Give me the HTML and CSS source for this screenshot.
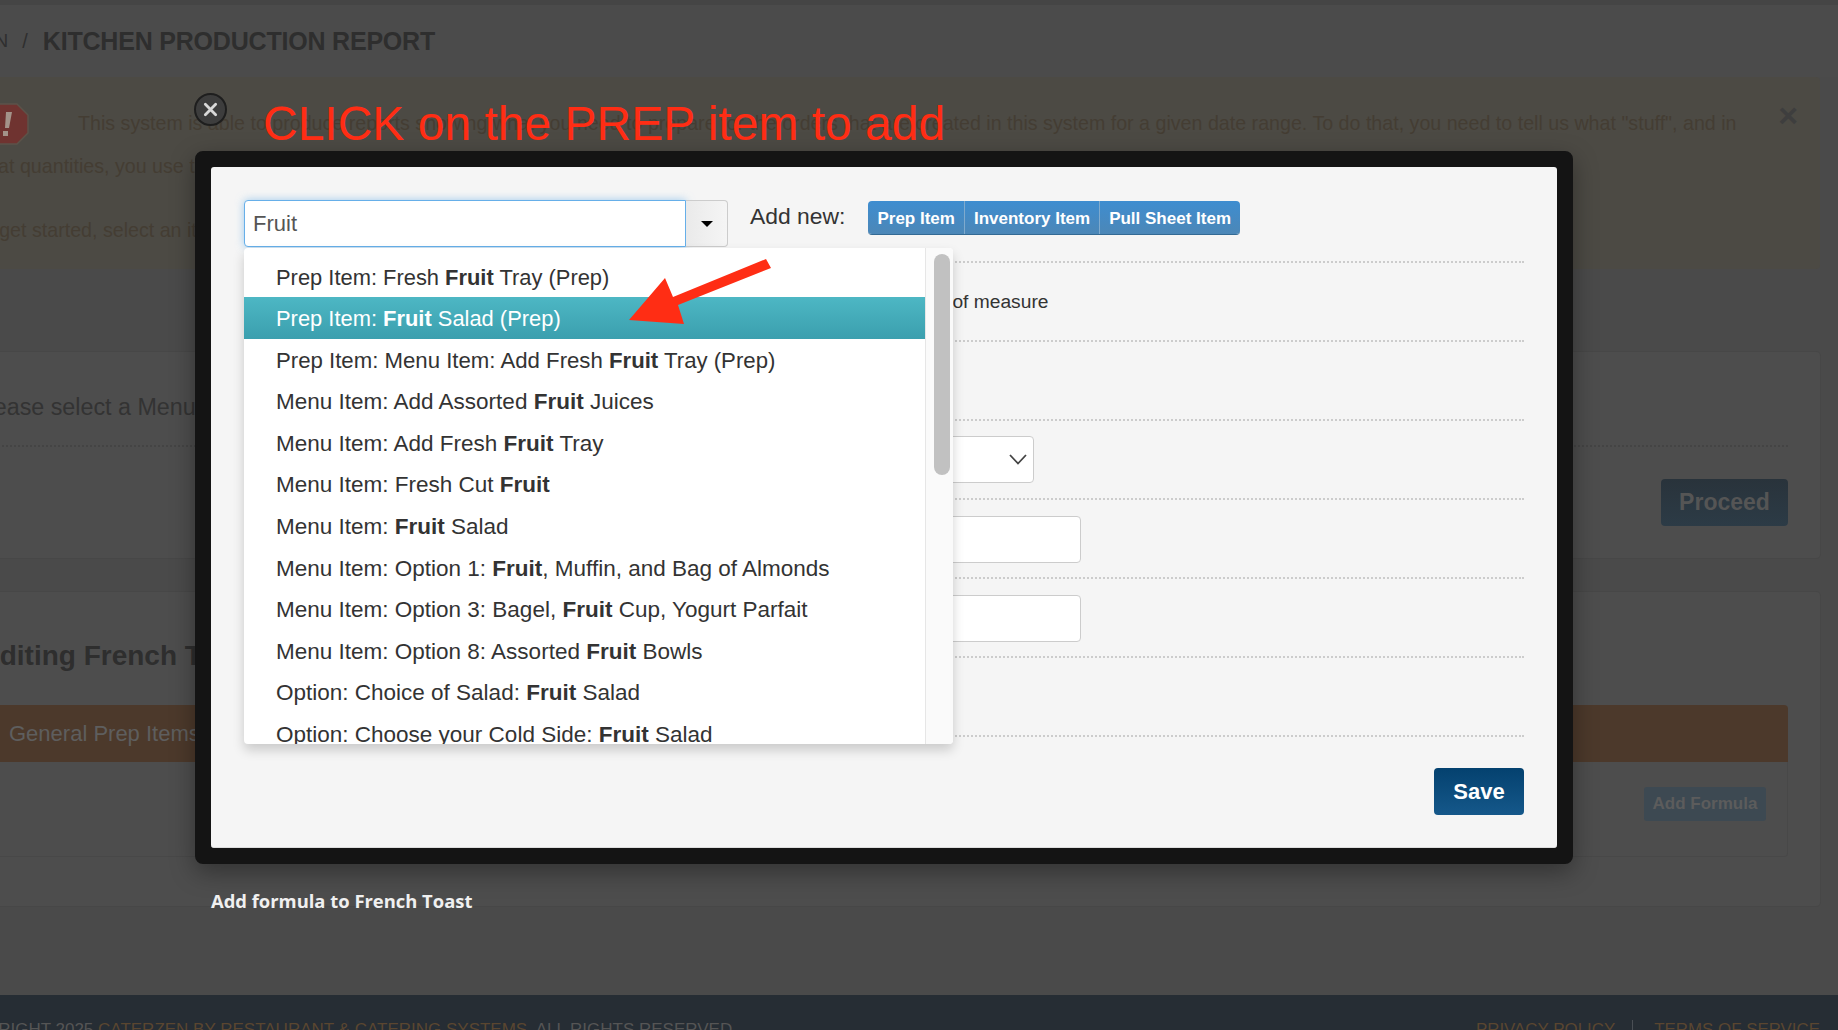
FILE: index.html
```html
<!DOCTYPE html>
<html lang="en">
<head>
    <meta charset="UTF-8">
    <meta name="viewport" content="width=device-width, initial-scale=1.0">
    <title>Kitchen Production Report</title>
    <link rel="stylesheet" href="styles.css">
</head>
<body>
<div class="page">
    <div class="crumbs">
        <span class="crumb-parent">ADMIN</span>
        <span class="crumb-sep">/</span>
        <span class="crumb-title">KITCHEN PRODUCTION REPORT</span>
    </div>

    <div class="alert">
        <div class="alert-first">
            <svg class="alert-icon" viewBox="0 0 42 42" width="42" height="42">
                <polygon points="12,1 30,1 41,12 41,30 30,41 12,41 1,30 1,12" fill="#6f3330" stroke="#5c5349" stroke-width="1.5" stroke-linejoin="round"/>
                <polygon points="19,9 25,9 22,25 18,25" fill="#a39389"/>
                <rect x="16" y="28" width="5" height="5" fill="#a39389"/>
            </svg>
            <span>This system is able to produce reports showing what you need to prepare for the orders that are created in this system for a given date range. To do that, you need to tell us what "stuff", and in</span>
        </div>
        <div class="alert-line">what quantities, you use to make each of your items.</div>
        <div class="alert-line alert-last">To get started, select an item from the list below.</div>
        <span class="alert-close">×</span>
    </div>

    <div class="panel panel-select">
        <div class="select-prompt">Please select a Menu Item</div>
        <div class="select-actions">
            <div class="btn-proceed">Proceed</div>
        </div>
    </div>

    <div class="panel panel-edit">
        <h2 class="edit-title">Editing French Toast</h2>
        <div class="orange-bar">General Prep Items</div>
        <div class="formula-box">
            <div class="btn-formula">Add Formula</div>
        </div>
    </div>

    <div class="footer">
        <div class="copyright">COPYRIGHT 2025 <span class="footer-link">CATERZEN BY RESTAURANT &amp; CATERING SYSTEMS</span>. ALL RIGHTS RESERVED.</div>
        <div class="footer-links">
            <span class="footer-link">PRIVACY POLICY</span>
            <span class="footer-divider"></span>
            <span class="footer-link">TERMS OF SERVICE</span>
        </div>
    </div>
</div>

<div class="annotation">CLICK on the PREP item to add</div>

<div class="modal">
    <div class="modal-inner">
        <div class="modal-top">
            <div class="combo">
                <div class="combo-input">Fruit</div>
                <div class="combo-toggle"><span class="caret"></span></div>
            </div>
            <span class="add-label">Add new:</span>
            <div class="btn-group">
                <span class="btn-add">Prep Item</span>
                <span class="btn-add">Inventory Item</span>
                <span class="btn-add">Pull Sheet Item</span>
            </div>
        </div>

        <div class="form-row form-row-unit">Unit of measure</div>
        <div class="form-row"></div>
        <div class="form-row">
            <div class="field field-select">
                <svg viewBox="0 0 18 11" width="18" height="11"><path d="M1 1 L9 9.5 L17 1" fill="none" stroke="#444" stroke-width="1.8"/></svg>
            </div>
        </div>
        <div class="form-row"><div class="field field-text"></div></div>
        <div class="form-row"><div class="field field-text"></div></div>
        <div class="form-row"></div>

        <div class="modal-actions">
            <div class="btn-save">Save</div>
        </div>

        <div class="dropdown">
            <ul class="dropdown-list">
                <li class="prep">Prep Item: Fresh <b>Fruit</b> Tray (Prep)</li>
                <li class="prep active">Prep Item: <b>Fruit</b> Salad (Prep)</li>
                <li class="prep-long">Prep Item: Menu Item: Add Fresh <b>Fruit</b> Tray (Prep)</li>
                <li>Menu Item: Add Assorted <b>Fruit</b> Juices</li>
                <li>Menu Item: Add Fresh <b>Fruit</b> Tray</li>
                <li>Menu Item: Fresh Cut <b>Fruit</b></li>
                <li>Menu Item: <b>Fruit</b> Salad</li>
                <li>Menu Item: Option 1: <b>Fruit</b>, Muffin, and Bag of Almonds</li>
                <li>Menu Item: Option 3: Bagel, <b>Fruit</b> Cup, Yogurt Parfait</li>
                <li>Menu Item: Option 8: Assorted <b>Fruit</b> Bowls</li>
                <li>Option: Choice of Salad: <b>Fruit</b> Salad</li>
                <li>Option: Choose your Cold Side: <b>Fruit</b> Salad</li>
            </ul>
            <div class="scrollbar"><div class="scroll-thumb"></div></div>
        </div>

        <svg class="arrow" viewBox="0 0 160 80" width="160" height="80">
            <polygon points="1,67 37,25 45,44 138,6 143,15 50,52 56,71" fill="#ff2d14"/>
        </svg>
    </div>
    <div class="modal-caption">Add formula to French Toast</div>
    <div class="modal-close">
        <svg viewBox="0 0 16 16" width="15" height="15"><path d="M2.5 2.5 L13.5 13.5 M13.5 2.5 L2.5 13.5" stroke="#d8d8d8" stroke-width="3" stroke-linecap="round"/></svg>
    </div>
</div>
</body>
</html>
```
FILE: styles.css
```css
html, body {
    margin: 0;
    padding: 0;
    height: 100%;
    overflow: hidden;
    background: #4a4a4a;
    font-family: "Liberation Sans", Arial, sans-serif;
}

/* page behind the dialog, scrolled a bit to the right */
.page {
    width: 1898px;
    height: 1030px;
    margin-left: -60px;
    box-sizing: border-box;
    display: flex;
    flex-direction: column;
    overflow: hidden;
    background: #4a4a4a;
}

.crumbs {
    height: 77px;
    box-sizing: border-box;
    padding-left: 7px;
    border-top: 5px solid #454545;
    display: flex;
    align-items: center;
    color: #2e2e2e;
    background: #4b4b4b;
}

.crumb-parent { font-size: 19px; color: #2f2f2f; }
.crumb-sep { font-size: 20px; margin: 0 15px 0 14px; color: #2f2f2f; }
.crumb-title { font-size: 25px; font-weight: bold; letter-spacing: -0.2px; }

.alert {
    position: relative;
    height: 192px;
    margin-right: 18px;
    box-sizing: border-box;
    padding: 25px 0 0 33px;
    background: #4c4a44;
    border-radius: 0 4px 4px 0;
    color: #443d33;
    font-size: 19.65px;
    line-height: 43px;
    white-space: nowrap;
}

.alert-first {
    display: flex;
    align-items: center;
    height: 43px;
}

.alert-icon {
    margin: 0 49px 0 14px;
    flex: none;
}

.alert-last { margin-top: 21px; }

.alert-close {
    position: absolute;
    top: 17px;
    right: 22px;
    font-size: 34px;
    font-weight: bold;
    color: #3e3e3e;
}

.panel {
    margin-right: 18px;
    box-sizing: border-box;
    background: #4d4d4d;
    border-radius: 0 4px 4px 0;
    box-shadow: 0 0 0 1px #474747;
}

.panel-select {
    height: 206px;
    margin-top: 83px;
    padding: 0 32px 0 33px;
}

.select-prompt {
    height: 95px;
    box-sizing: border-box;
    padding-top: 41px;
    font-size: 23.3px;
    line-height: 28px;
    color: #333;
    border-bottom: 2px dotted #444;
}

.select-actions {
    display: flex;
    justify-content: flex-end;
    padding-top: 32px;
}

.btn-proceed {
    width: 127px;
    height: 47px;
    line-height: 47px;
    text-align: center;
    border-radius: 4px;
    background: linear-gradient(#29333b, #2c3b46);
    color: #555;
    font-size: 23px;
    font-weight: bold;
}

.panel-edit {
    height: 314px;
    margin-top: 34px;
    padding: 0 32px 0 33px;
}

.edit-title {
    margin: 0;
    padding: 47px 0 0 8px;
    height: 113px;
    box-sizing: border-box;
    font-size: 28px;
    line-height: 34px;
    color: #2e2e2e;
}

.orange-bar {
    height: 57px;
    line-height: 57px;
    padding-left: 36px;
    box-sizing: border-box;
    background: #4c392b;
    border-radius: 4px 4px 0 0;
    color: #5e5e5e;
    font-size: 22px;
}

.formula-box {
    height: 95px;
    box-sizing: border-box;
    padding: 25px 21px 0 0;
    display: flex;
    justify-content: flex-end;
    align-items: flex-start;
    border: 1px solid #484848;
    border-top: none;
    border-radius: 0 0 4px 4px;
}

.btn-formula {
    width: 122px;
    height: 34px;
    line-height: 34px;
    text-align: center;
    border-radius: 3px;
    background: #3d4952;
    color: #5c5c5c;
    font-size: 17px;
    font-weight: bold;
}

.footer {
    margin-top: auto;
    height: 35px;
    flex: none;
    box-sizing: border-box;
    padding: 24px 18px 0 10px;
    display: flex;
    justify-content: space-between;
    background: #262d34;
    color: #555;
    font-size: 17px;
    line-height: 22px;
    white-space: nowrap;
}

.footer-link { color: #5a4630; }
.footer-links { display: flex; font-size: 16.9px; }
.footer-divider {
    width: 1px;
    height: 30px;
    margin: 1px 21px 0 17px;
    background: #4a4f55;
}

/* red note drawn on top of the screenshot */
.annotation {
    position: absolute;
    left: 263px;
    top: 94px;
    font-size: 48px;
    line-height: 60px;
    color: #ff2d14;
    white-space: nowrap;
    z-index: 5;
}

.modal {
    position: absolute;
    left: 195px;
    top: 151px;
    width: 1378px;
    height: 713px;
    box-sizing: border-box;
    border: 16px solid #141414;
    border-radius: 8px;
    background: #141414;
    box-shadow: 0 8px 24px rgba(0, 0, 0, 0.35);
}

.modal-inner {
    position: relative;
    height: 100%;
    box-sizing: border-box;
    padding: 33px 33px 0;
    background: #f5f5f5;
    border-radius: 3px;
    border-bottom: 1px solid #ddd;
    color: #333;
}

.modal-top {
    height: 61px;
    display: flex;
    align-items: flex-start;
    border-bottom: 2px dotted #ccc;
}

.combo {
    display: flex;
    width: 484px;
    height: 47px;
}

.combo-input {
    flex: 1;
    box-sizing: border-box;
    padding-left: 8px;
    background: #fff;
    border: 1px solid #66afe9;
    border-radius: 4px 0 0 4px;
    box-shadow: 0 0 8px rgba(102, 175, 233, 0.6);
    font-size: 22px;
    line-height: 45px;
    color: #555;
}

.combo-toggle {
    width: 42px;
    box-sizing: border-box;
    display: flex;
    align-items: center;
    justify-content: center;
    background: linear-gradient(to right, #eaeaea, #f5f5f5);
    border: 1px solid #ccc;
    border-left: none;
    border-radius: 0 4px 4px 0;
}

.caret {
    width: 0;
    height: 0;
    border-left: 6px solid transparent;
    border-right: 6px solid transparent;
    border-top: 6px solid #000;
}

.add-label {
    margin: 2px 23px 0 22px;
    font-size: 22.9px;
    line-height: 28px;
}

.btn-group {
    display: flex;
    height: 34px;
    margin-top: 1px;
    border-radius: 4px;
    overflow: hidden;
    border-bottom: 1px solid #336a94;
    box-sizing: border-box;
}

.btn-add {
    padding: 0 9px;
    line-height: 35px;
    font-size: 17px;
    font-weight: bold;
    color: #fff;
    background: linear-gradient(#3e8dd0, #4c87b7);
    border-left: 1px solid #7faacd;
}

.btn-add:first-child { border-left: none; }

.form-row {
    height: 79px;
    box-sizing: border-box;
    display: flex;
    align-items: center;
    border-bottom: 2px dotted #ccc;
}

.form-row-unit {
    padding-left: 669px;
    font-size: 19.2px;
    color: #333;
}

.field {
    box-sizing: border-box;
    height: 47px;
    background: #fff;
    border: 1px solid #ccc;
    border-radius: 4px;
}

.field-select {
    width: 790px;
    display: flex;
    align-items: center;
    justify-content: flex-end;
    padding-right: 6px;
}

.field-text { width: 837px; margin-top: 2px; }

.modal-actions {
    display: flex;
    justify-content: flex-end;
    padding-top: 31px;
}

.btn-save {
    width: 90px;
    height: 47px;
    line-height: 48px;
    text-align: center;
    border-radius: 4px;
    background: linear-gradient(#04416f, #15588a);
    color: #fff;
    font-size: 22px;
    font-weight: bold;
}

.dropdown {
    position: absolute;
    left: 33px;
    top: 81px;
    width: 709px;
    height: 496px;
    display: flex;
    background: #fff;
    border-radius: 4px;
    box-shadow: 0 6px 12px rgba(0, 0, 0, 0.175);
    overflow: hidden;
}

.dropdown-list {
    flex: 1;
    margin: 0;
    padding: 7.5px 0 0;
    list-style: none;
    overflow: hidden;
}

.dropdown-list li {
    height: 41.6px;
    padding-left: 32px;
    font-size: 22.5px;
    line-height: 43px;
    color: #333;
    white-space: nowrap;
}

.dropdown-list li.prep { font-size: 21.9px; }
.dropdown-list li.prep-long { font-size: 22.2px; }

.dropdown-list li.active {
    color: #fff;
    background: linear-gradient(#4db7c4, #3b9fae);
}

.scrollbar {
    width: 28px;
    flex: none;
    box-sizing: border-box;
    padding: 6px 4px 0 8px;
    background: #fafafa;
    border-left: 1px solid #e6e6e6;
}

.scroll-thumb {
    width: 16px;
    height: 221px;
    border-radius: 8px;
    background: #c1c1c1;
}

.arrow {
    position: absolute;
    left: 417px;
    top: 86px;
}

.modal-caption {
    position: absolute;
    left: 0;
    top: 722px;
    font-family: "Open Sans", sans-serif;
    font-size: 18.4px;
    font-weight: bold;
    line-height: 24px;
    color: #f0f0f0;
    white-space: nowrap;
}

.modal-close {
    position: absolute;
    left: -17px;
    top: -74px;
    width: 33px;
    height: 33px;
    box-sizing: border-box;
    display: flex;
    align-items: center;
    justify-content: center;
    border-radius: 50%;
    background: #3d3d3d;
    border: 2px solid #1e1e1e;
    z-index: 6;
}
```
